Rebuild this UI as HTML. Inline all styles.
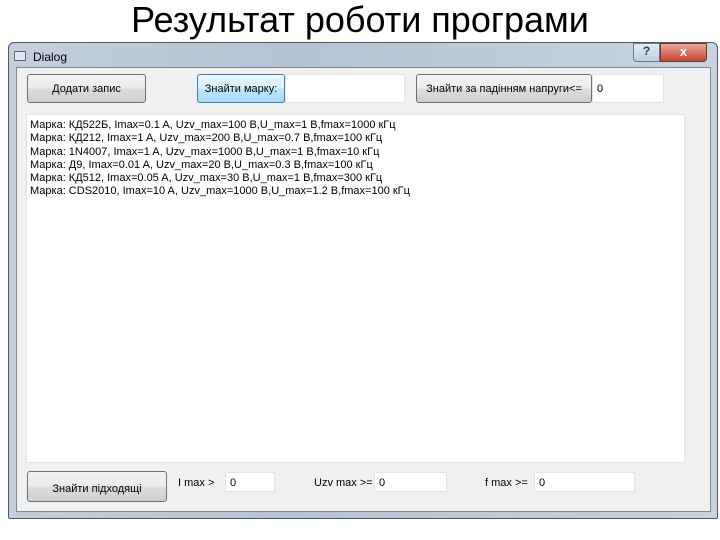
<!DOCTYPE html>
<html><head><meta charset="utf-8"><style>
body{margin:0;width:720px;height:540px;background:#fff;position:relative;overflow:hidden;font-family:"Liberation Sans","DejaVu Sans",sans-serif;}
.a{position:absolute;box-sizing:border-box}
.t{font-size:11px;color:#000;white-space:nowrap}
.btn{border:1px solid #707070;border-radius:3px;background:linear-gradient(#f2f2f2,#ebebeb 50%,#dddddd 51%,#cfcfcf);font-size:11px;display:flex;align-items:center;justify-content:center}
.inp{background:#fff;border:1px solid #e3e3e3;font-size:11px;padding:4px 0 0 4px}
</style></head><body>
<div class="a" style="left:0;top:0;width:720px;height:42px;text-align:center;font-size:36px;line-height:40px;color:#000">Результат роботи програми</div>
<div class="a" style="left:8px;top:42px;width:710px;height:477px;background:linear-gradient(90deg,#c3cfdb,#b4c3d2 40%,#c8d3de);border:1px solid #4a5a6a;border-radius:6px 6px 2px 2px"></div>
<div class="a" style="left:14px;top:51px;width:12px;height:10px;border:1px solid #666;background:#dfe8f2"></div>
<div class="a t" style="left:33px;top:50px;font-size:12px">Dialog</div>
<div class="a" style="left:633px;top:43px;width:27px;height:19px;border:1px solid #6d7d90;border-radius:0 0 0 4px;background:linear-gradient(#e3ebf3,#bfcedd);font-size:12px;text-align:center;color:#345;font-weight:bold">?</div>
<div class="a" style="left:660px;top:43px;width:47px;height:19px;border:1px solid #6d3a30;border-radius:0 0 4px 0;background:linear-gradient(#e9a89a,#c7452f);font-size:13px;text-align:center;color:#fff;font-weight:bold">x</div>
<div class="a" style="left:16px;top:67px;width:695px;height:445px;background:#f0f0f0;border:1px solid #7d8b99"></div>
<div class="a btn" style="left:27px;top:74px;width:119px;height:29px">Додати запис</div>
<div class="a btn" style="left:197px;top:74px;width:88px;height:29px;border-color:#3c7fb1;background:linear-gradient(#eaf6fd,#d9f0fc 50%,#bee6fd 51%,#a7d9f5)">Знайти марку:</div>
<div class="a inp" style="left:285px;top:74px;width:120px;height:29px;padding-top:8px"></div>
<div class="a btn" style="left:416px;top:74px;width:176px;height:29px">Знайти за падінням напруги&lt;=</div>
<div class="a inp" style="left:592px;top:74px;width:72px;height:29px;padding-top:8px">0</div>
<div class="a" style="left:26px;top:114px;width:659px;height:349px;background:#fff;border:1px solid #e3e3e3"></div>
<div class="a t" style="left:30px;top:119px;line-height:13.3px">Марка: КД522Б, Imax=0.1 A, Uzv_max=100 B,U_max=1 B,fmax=1000 кГц<br>Марка: КД212, Imax=1 A, Uzv_max=200 B,U_max=0.7 B,fmax=100 кГц<br>Марка: 1N4007, Imax=1 A, Uzv_max=1000 B,U_max=1 B,fmax=10 кГц<br>Марка: Д9, Imax=0.01 A, Uzv_max=20 B,U_max=0.3 B,fmax=100 кГц<br>Марка: КД512, Imax=0.05 A, Uzv_max=30 B,U_max=1 B,fmax=300 кГц<br>Марка: CDS2010, Imax=10 A, Uzv_max=1000 B,U_max=1.2 B,fmax=100 кГц</div>
<div class="a btn" style="left:27px;top:471px;width:140px;height:31px;padding-top:4px">Знайти підходящі</div>
<div class="a t" style="left:178px;top:477px">I max &gt;</div>
<div class="a inp" style="left:225px;top:472px;width:50px;height:20px">0</div>
<div class="a t" style="left:314px;top:477px">Uzv max &gt;=</div>
<div class="a inp" style="left:374px;top:472px;width:73px;height:20px">0</div>
<div class="a t" style="left:485px;top:477px">f max &gt;=</div>
<div class="a inp" style="left:534px;top:472px;width:101px;height:20px">0</div>
</body></html>
